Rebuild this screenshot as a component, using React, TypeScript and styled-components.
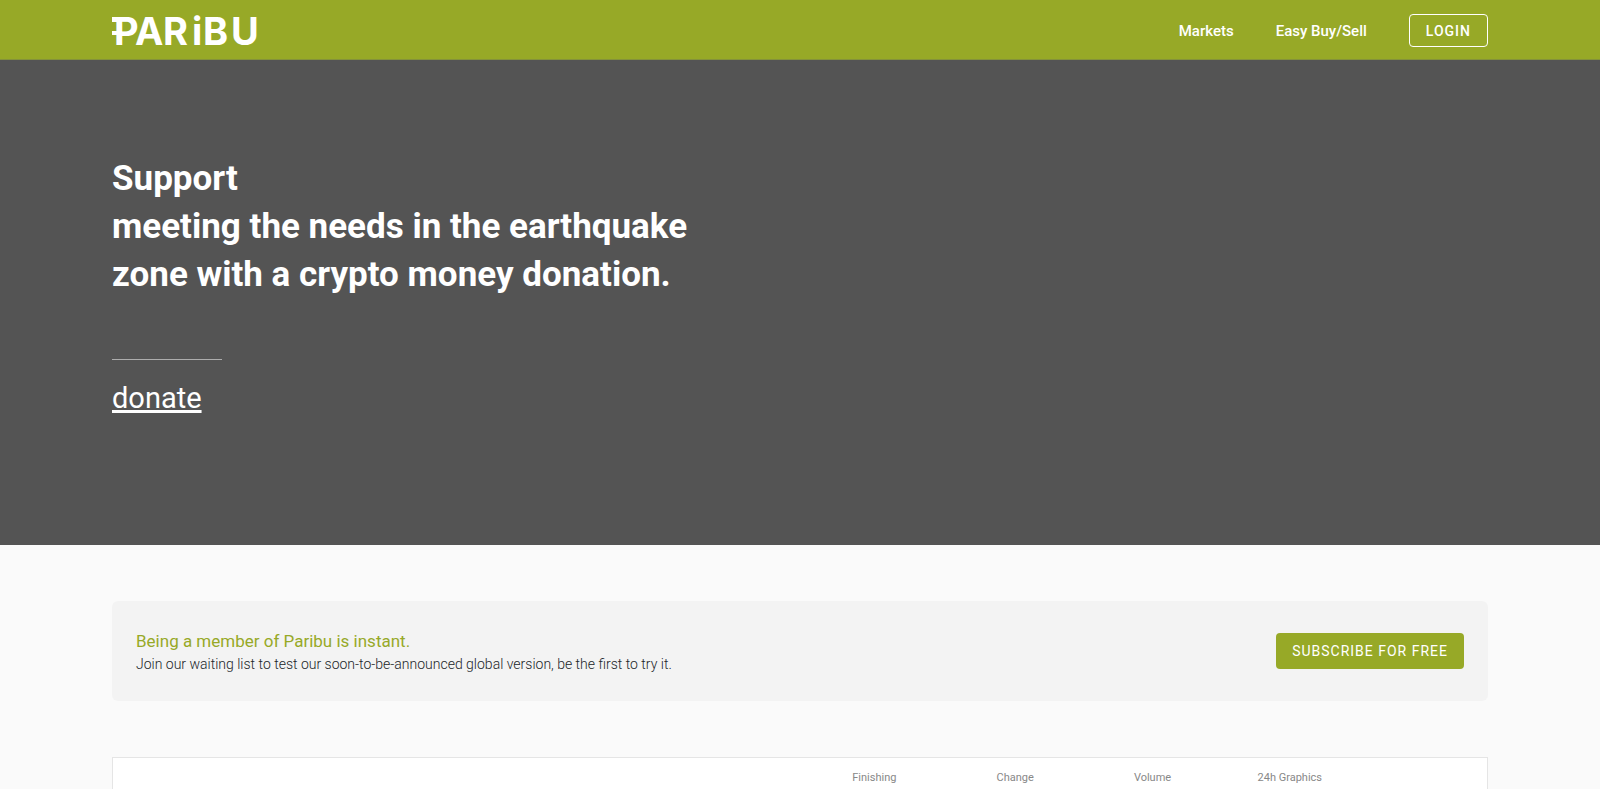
import React from "react";
import styled, { createGlobalStyle } from "styled-components";

const GlobalStyle = createGlobalStyle`
  *, *::before, *::after { box-sizing: border-box; }
  body {
    margin: 0;
    background: #fafafa;
    color: #212529;
    font-family: Roboto, "Noto Sans", sans-serif;
    font-size: 14px;
    line-height: 20px;
  }
`;

const green = "#97a927";

const Header = styled.header`
  display: flex;
  align-items: center;
  justify-content: space-between;
  height: 60px;
  padding: 1px 7% 0;
  background: ${green};
  box-shadow: inset 0 -1px #84923a;
`;

const LogoLink = styled.a`
  display: flex;
  color: #fff;
`;

const Nav = styled.nav`
  display: flex;
  align-items: center;
  gap: 42px;
`;

const NavLink = styled.a`
  color: #fff;
  font-size: 15px;
  font-weight: 500;
  text-decoration: none;
`;

const Button = styled.button<{ $outlined?: boolean }>`
  height: ${(p) => (p.$outlined ? 33 : 36)}px;
  padding: 0 16px;
  border: ${(p) => (p.$outlined ? "1px solid #fff" : "0")};
  border-radius: 4px;
  background: ${green};
  color: #fff;
  font-family: inherit;
  font-size: 14px;
  font-weight: ${(p) => (p.$outlined ? 500 : 400)};
  letter-spacing: 1px;
  text-transform: uppercase;
  cursor: pointer;
`;

const Hero = styled.section`
  min-height: 485px;
  padding: 95px 7% 0;
  background: #545454;
  color: #fff;
`;

const HeroTitle = styled.h1`
  margin: 0;
  font-size: 35px;
  font-weight: 700;
  line-height: 48px;
`;

const Rule = styled.hr`
  width: 110px;
  height: 1px;
  margin: 60px 0 16px;
  border: 0;
  background: #adadad;
`;

const DonateLink = styled.a`
  color: #fff;
  font-size: 29px;
  line-height: 44px;
  text-decoration: underline;
  text-decoration-thickness: 3px;
  text-decoration-skip-ink: none;
  text-underline-offset: 2px;
`;

const Content = styled.main`
  display: grid;
  gap: 56px;
  padding: 56px 7% 0;
`;

const Banner = styled.section`
  display: flex;
  align-items: center;
  justify-content: space-between;
  min-height: 100px;
  padding: 0 24px;
  border-radius: 6px;
  background: #f3f3f3;
`;

const BannerTitle = styled.h2`
  margin: 0;
  color: ${green};
  font-size: 17px;
  font-weight: 400;
  line-height: 26px;
`;

const BannerText = styled.p`
  margin: 0;
  font-weight: 300;
`;

const Markets = styled.section`
  background: #fff;
  border: 1px solid #e5e5e5;
`;

const MarketTable = styled.table`
  width: 100%;
  border-collapse: collapse;
  table-layout: fixed;
`;

const HeadCell = styled.th<{ $width: string }>`
  width: ${(p) => p.$width};
  height: 31px;
  padding: 8px 0 0;
  color: #888;
  font-size: 11px;
  line-height: 22px;
  font-weight: 400;
  text-align: left;
`;

const columns = [
  { label: "", width: "53.8%" },
  { label: "Finishing", width: "10.5%" },
  { label: "Change", width: "10%" },
  { label: "Volume", width: "9%" },
  { label: "24h Graphics", width: "16.7%" },
];

const Logo = () => (
  <svg width="160" height="56" viewBox="0 0 160 56" role="img" aria-label="Paribu" fill="currentColor">
    <text x="2 23 51 80 91 119" y="42" fontFamily="Inter, sans-serif" fontSize="38" fontWeight="700">
      PARiBU
    </text>
    <rect x="0" y="14" width="8" height="5" />
    <rect x="0" y="28" width="10" height="4" />
  </svg>
);

export default function App() {
  return (
    <>
      <GlobalStyle />
      <Header>
        <LogoLink href="#"><Logo /></LogoLink>
        <Nav>
          <NavLink href="#">Markets</NavLink>
          <NavLink href="#">Easy Buy/Sell</NavLink>
          <Button $outlined>Login</Button>
        </Nav>
      </Header>
      <Hero>
        <HeroTitle>
          Support<br />
          meeting the needs in the earthquake<br />
          zone with a crypto money donation.
        </HeroTitle>
        <Rule />
        <DonateLink href="#">donate</DonateLink>
      </Hero>
      <Content>
        <Banner>
          <div>
            <BannerTitle>Being a member of Paribu is instant.</BannerTitle>
            <BannerText>
              Join our waiting list to test our soon-to-be-announced global version, be the first to try it.
            </BannerText>
          </div>
          <Button>Subscribe for free</Button>
        </Banner>
        <Markets>
          <MarketTable>
            <thead>
              <tr>
                {columns.map((c) => (
                  <HeadCell key={c.width} $width={c.width} scope="col">{c.label}</HeadCell>
                ))}
              </tr>
            </thead>
          </MarketTable>
        </Markets>
      </Content>
    </>
  );
}
